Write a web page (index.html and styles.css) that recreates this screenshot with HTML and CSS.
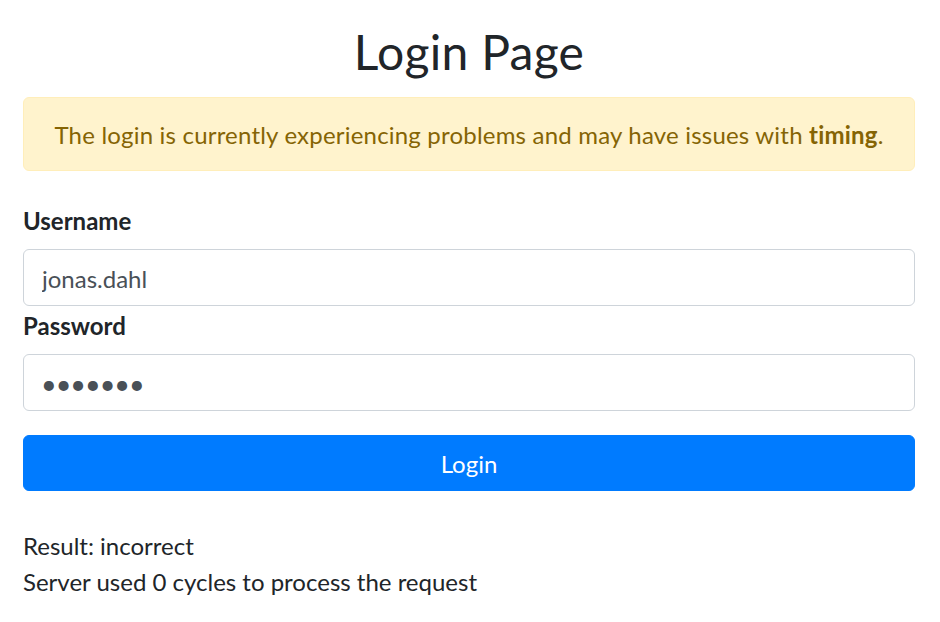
FILE: index.html
```html
<!DOCTYPE html>
<html lang="en">
<head>
<meta charset="utf-8">
<title>Login Page</title>
<link rel="stylesheet" href="styles.css">
</head>
<body>
<main class="container">
  <h2 class="title">Login Page</h2>
  <div class="alert">The login is currently experiencing problems and may have issues with <strong>timing</strong>.</div>
  <form class="login-form" onsubmit="return false">
    <label class="field-label" for="username">Username</label>
    <input class="form-control" id="username" type="text" value="jonas.dahl">
    <label class="field-label" for="password">Password</label>
    <input class="form-control password" id="password" type="password" value="1234567">
    <button class="btn-login" type="submit">Login</button>
  </form>
  <div class="result">
    <p class="result-line">Result: incorrect</p>
    <p class="result-line">Server used 0 cycles to process the request</p>
  </div>
</main>
</body>
</html>
```
FILE: styles.css
```css
* { box-sizing: border-box; }
html, body { margin: 0; padding: 0; background: #fff; }
body {
  font-family: Lato, "Noto Sans", "Liberation Sans", sans-serif;
  font-size: 24px;
  line-height: 1.5;
  color: #212529;
}
.container {
  padding: 23px 25px 0 23px;
  display: flex;
  flex-direction: column;
}
.title {
  margin: 0 0 16px;
  font-size: 48px;
  font-weight: 400;
  line-height: 57.6px;
  text-align: center;
  letter-spacing: 0.3px;
}
.alert {
  background: #fff3cd;
  border: 1px solid #ffeeba;
  color: #856404;
  border-radius: 6px;
  padding: 19px 30px 17px;
  text-align: center;
  line-height: 36px;
  letter-spacing: 0.2px;
}
.alert strong { font-weight: 700; }
.login-form {
  display: flex;
  flex-direction: column;
  margin-top: 30px;
}
.field-label {
  font-weight: 700;
  line-height: 36px;
  padding-top: 2px;
  margin-bottom: 10px;
  height: 38px;
}
.form-control {
  height: 57px;
  border: 1px solid #ced4da;
  border-radius: 6px;
  padding: 10px 18px 8px;
  font-family: inherit;
  font-size: 24px;
  color: #495057;
  background: #fff;
  outline: none;
}
.form-control.password {
  font-size: 27px;
  letter-spacing: -1px;
  padding-top: 7px;
  padding-bottom: 5px;
  padding-left: 17px;
}
.btn-login {
  margin-top: 24px;
  height: 56px;
  border: 1px solid #007bff;
  background: #007bff;
  color: #fff;
  border-radius: 6px;
  font-family: inherit;
  font-size: 24px;
  line-height: 36px;
  padding-top: 4px;
}
.result { margin-top: 37px; }
.result-line { margin: 0; line-height: 36px; }
```
